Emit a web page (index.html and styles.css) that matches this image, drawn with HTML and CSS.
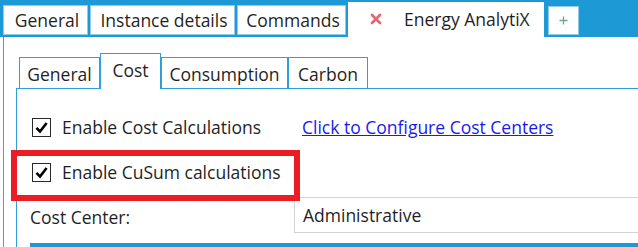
FILE: index.html
```html
<!DOCTYPE html>
<html>
<head>
  <title>Energy AnalytiX</title>
  <meta name="viewport" content="width=device-width, initial-scale=1">
  <link rel="stylesheet" href="styles.css">
</head>
<body>
  <div class="top-tabs">
    <div class="top-tab tab-general">General</div>
    <div class="top-tab tab-instance">Instance details</div>
    <div class="top-tab tab-commands">Commands</div>
    <div class="top-tab tab-energy active">
      <svg class="close-icon" width="12" height="12" viewBox="0 0 12 12">
        <path d="M2 2 L10 10 M10 2 L2 10" stroke="#e06a6f" stroke-width="2.8" stroke-linecap="round"/>
      </svg>
      <span>Energy AnalytiX</span>
    </div>
    <div class="top-tab tab-add">
      <svg width="9" height="9" viewBox="0 0 9 9">
        <path d="M4.5 0.5 V8.5 M0.5 4.5 H8.5" stroke="#6fa58c" stroke-width="1.3"/>
      </svg>
    </div>
  </div>

  <div class="outer-body">
    <div class="inner-tabs">
      <div class="inner-tab itab-general">General</div>
      <div class="inner-tab itab-cost active">Cost</div>
      <div class="inner-tab itab-consumption">Consumption</div>
      <div class="inner-tab itab-carbon">Carbon</div>
    </div>
    <div class="inner-body">
      <div class="form">
        <div class="row row-first">
          <label class="check">
            <span class="box">
              <svg width="15" height="15" viewBox="0 0 14 14">
                <path d="M2.3 7.3 L5.6 10.8 L11.8 2.8" fill="none" stroke="#000" stroke-width="2.4"/>
              </svg>
            </span>
            Enable Cost Calculations
          </label>
          <a class="link" href="#">Click to Configure Cost Centers</a>
        </div>
        <div class="row row-second">
          <label class="check">
            <span class="box">
              <svg width="15" height="15" viewBox="0 0 14 14">
                <path d="M2.3 7.3 L5.6 10.8 L11.8 2.8" fill="none" stroke="#000" stroke-width="2.4"/>
              </svg>
            </span>
            Enable CuSum calculations
          </label>
        </div>
        <div class="row row-center">
          <div class="field-label">Cost Center:</div>
          <div class="field-box">Administrative</div>
        </div>
        <div class="bottom-bar"></div>
        <div class="highlight"></div>
      </div>
    </div>
  </div>
</body>
</html>
```

FILE: styles.css
```css
body {
  margin: 0;
  font-family: "Open Sans", "Noto Sans", sans-serif;
  font-size: 17.5px;
  color: #1f1f1f;
  background: #fff;
  overflow: hidden;
}

/* outer tab strip */
.top-tabs {
  display: flex;
  align-items: flex-end;
  height: 37px;
  background: #1d9ad6;
  padding-left: 3px;
  gap: 2px;
}
.top-tab {
  box-sizing: border-box;
  height: 30px;
  margin-bottom: 2px;
  background: #fff;
  border: 1px solid #8fcbeb;
  display: flex;
  align-items: center;
  justify-content: center;
  padding-left: 3px;
}
.tab-general { width: 85px; }
.tab-instance { width: 145px; }
.tab-commands { width: 109px; }
.tab-energy {
  width: 196px;
  height: 35px;
  margin-bottom: 0;
  border: none;
  justify-content: flex-start;
  padding-left: 22px;
  padding-bottom: 2px;
}
.close-icon {
  margin-right: 22px;
}
.tab-add {
  width: 31px;
  height: 29px;
  margin-left: 2px;
  padding-left: 0;
}

/* outer content */
.outer-body {
  box-sizing: border-box;
  margin-left: 3px;
  border-left: 1px solid #3ea4dc;
  padding: 16px 0 0 12px;
  height: 210px;
}

.inner-tabs {
  display: flex;
  align-items: flex-end;
  height: 35px;
  padding-left: 3px;
  border-bottom: 1px solid #2f9edb;
}
.inner-tab {
  box-sizing: border-box;
  height: 31px;
  border: 1px solid #2f9edb;
  border-bottom: none;
  display: flex;
  align-items: center;
  justify-content: center;
  padding-top: 1px;
}
.itab-general { width: 81px; }
.itab-cost {
  width: 61px;
  height: 36px;
  margin-bottom: -1px;
  background: #fff;
  padding-bottom: 4px;
}
.itab-consumption { width: 127px; }
.itab-carbon { width: 80px; }

.inner-body {
  border-left: 1px solid #2f9edb;
  height: 158px;
}

.form {
  position: relative;
  padding: 29px 0 0 13px;
}
.row {
  display: flex;
  align-items: center;
  height: 18px;
}
.row-second {
  margin-top: 27px;
}
.row-center {
  margin-top: 16px;
  height: 36px;
}

.check {
  display: flex;
  align-items: center;
  margin-left: 2px;
}
.box {
  box-sizing: border-box;
  width: 19px;
  height: 19px;
  border: 1.6px solid #2a2a2a;
  display: flex;
  align-items: center;
  justify-content: center;
  margin-right: 11px;
}
.link {
  color: #1a1af0;
  text-decoration: underline;
}
.row-first .check {
  width: 270px;
}

.field-label {
  width: 264px;
  padding-top: 4px;
}
.field-box {
  box-sizing: border-box;
  flex: 1;
  height: 36px;
  border: 1px solid #d3d3d3;
  border-right: none;
  padding-left: 8px;
  display: flex;
  align-items: center;
}

.bottom-bar {
  margin-top: 10px;
  height: 5px;
  background: #1d9ad6;
}

.highlight {
  position: absolute;
  left: -6px;
  top: 61px;
  width: 289px;
  height: 51px;
  box-sizing: border-box;
  border: 6px solid #ea1c24;
}
```
